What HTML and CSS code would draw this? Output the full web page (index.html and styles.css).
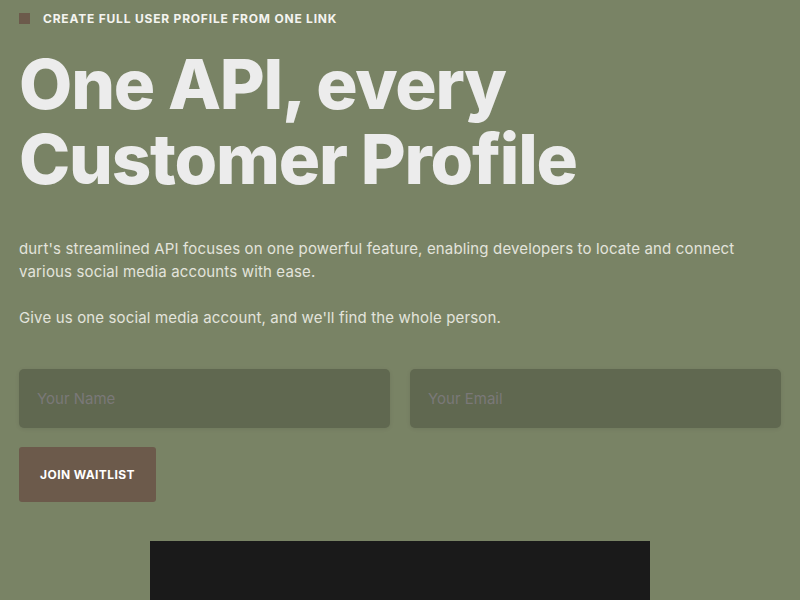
FILE: index.html
```html
<!DOCTYPE html>
<html lang="en">
  <head>
    <meta charset="UTF-8">
    <meta name="viewport" content="width=device-width, initial-scale=1.0">
    <title>durt - One API, every Customer Profile</title>
    <link rel="stylesheet" href="styles.css">
  </head>
  <body>
    <div class="hero">
      <div class="eyebrow">
        <span class="eyebrow-dot"></span>
        <span>Create full user profile from one link</span>
      </div>
      <h1 class="title">One API, every<br>Customer Profile</h1>
      <div class="intro">
        <p>durt's streamlined API focuses on one powerful feature, enabling developers to locate and connect various social media accounts with ease.</p>
        <p>Give us one social media account, and we'll find the whole person.</p>
      </div>
      <form class="waitlist">
        <div class="fields">
          <input type="text" placeholder="Your Name">
          <input type="email" placeholder="Your Email">
        </div>
        <button type="button" class="btn">Join waitlist</button>
      </form>
      <div class="demo"></div>
    </div>
  </body>
</html>
```

FILE: styles.css
```css
html,
body {
  margin: 0;
  background-color: #798365;
  font-family: "Inter", "Open Sans", sans-serif;
  color: #ececec;
}
.hero {
  padding: 11px 19px 0;
}
.eyebrow {
  display: flex;
  align-items: center;
  gap: 13px;
  font-size: 12px;
  font-weight: 700;
  letter-spacing: 0.8px;
  text-transform: uppercase;
  color: #f4f4f0;
}
.eyebrow-dot {
  width: 11px;
  height: 11px;
  background-color: #6c5a4b;
}
.title {
  margin: 21px 0 0;
  font-size: 69px;
  line-height: 75px;
  font-weight: 800;
  letter-spacing: -1.2px;
  color: #ececec;
}
.intro {
  margin-top: 40px;
  font-size: 15px;
  line-height: 23px;
  letter-spacing: 0.15px;
  color: #e3e4dc;
}
.intro p {
  margin: 0 0 23px;
}
.waitlist {
  margin-top: 40px;
}
.fields {
  display: flex;
  gap: 20px;
}
.fields input {
  flex: 1;
  height: 59px;
  box-sizing: border-box;
  padding: 0 18px;
  border: 0;
  border-radius: 5px;
  background-color: #606850;
  box-shadow: 0 1px 4px rgba(0, 0, 0, 0.08);
  font-family: inherit;
  font-size: 15px;
  color: #ececec;
  outline: none;
}
.fields input::placeholder {
  color: #7a7878;
}
.btn {
  margin-top: 19px;
  width: 137px;
  height: 55px;
  border: 0;
  border-radius: 3px;
  background-color: #6c5a4b;
  color: #ffffff;
  font-family: inherit;
  font-size: 12px;
  font-weight: 700;
  letter-spacing: 0.4px;
  text-transform: uppercase;
}
.demo {
  width: 500px;
  height: 300px;
  margin: 39px auto 0;
  background-color: #1a1a1a;
}
```
